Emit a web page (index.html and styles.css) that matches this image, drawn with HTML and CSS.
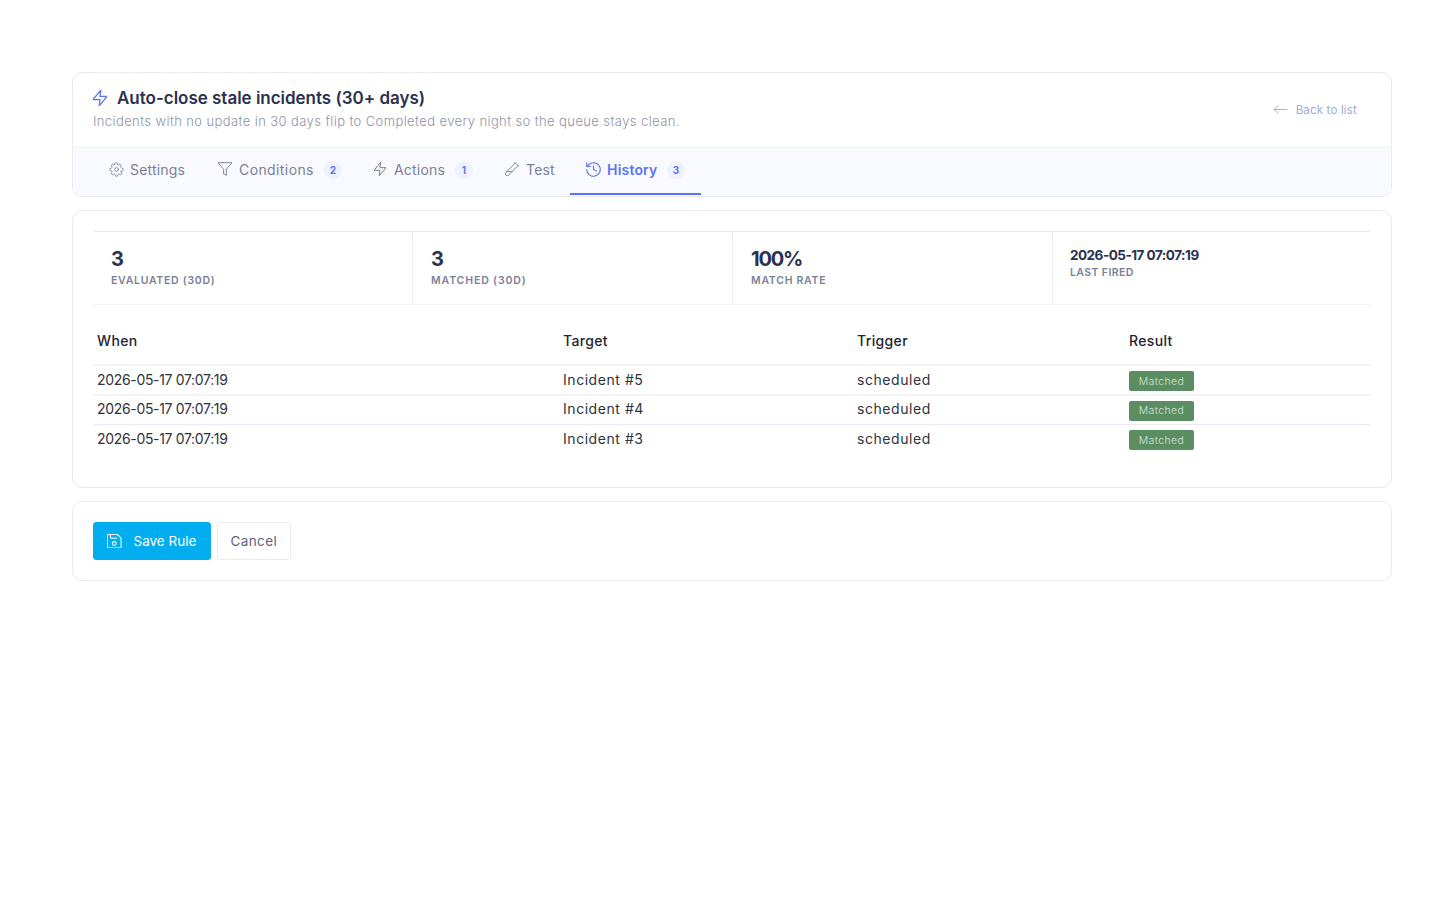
FILE: index.html
```html
<!DOCTYPE html>
<html lang="en">
<head>
<meta charset="utf-8">
<title>Auto-close stale incidents</title>
<link rel="stylesheet" href="styles.css">
</head>
<body>
<main class="page">
  <section class="card head-card">
    <header class="head">
      <div class="head-text">
        <h1 class="title">
          <svg class="ic ic-title" viewBox="3 2 18 20"><path d="M13 2 3 14h9l-1 8 10-12h-9l1-8z"/></svg>
          <span>Auto-close stale incidents (30+ days)</span>
        </h1>
        <p class="sub">Incidents with no update in 30 days flip to Completed every night so the queue stays clean.</p>
      </div>
      <a class="back" href="#">
        <svg class="ic ic-back" viewBox="0 0 24 24"><path d="M20 12H4M9 17l-5-5 5-5"/></svg>
        <span>Back to list</span>
      </a>
    </header>
    <nav class="tabs">
      <a class="tab t-settings" href="#"><svg class="ic" viewBox="0 0 24 24"><circle cx="12" cy="12" r="3"/><path d="M19.4 15a1.65 1.65 0 0 0 .33 1.82l.06.06a2 2 0 1 1-2.83 2.83l-.06-.06a1.65 1.65 0 0 0-2.82 1.17V21a2 2 0 1 1-4 0v-.09A1.65 1.65 0 0 0 9 19.4a1.65 1.65 0 0 0-1.82.33l-.06.06a2 2 0 1 1-2.83-2.83l.06-.06a1.65 1.65 0 0 0-1.17-2.82H3a2 2 0 1 1 0-4h.09A1.65 1.65 0 0 0 4.6 9a1.65 1.65 0 0 0-.33-1.82l-.06-.06a2 2 0 1 1 2.83-2.83l.06.06A1.65 1.65 0 0 0 9 4.68V3a2 2 0 1 1 4 0v.09a1.65 1.65 0 0 0 2.82 1.17l.06-.06a2 2 0 1 1 2.83 2.83l-.06.06A1.65 1.65 0 0 0 19.4 9c.26.6.85 1 1.51 1H21a2 2 0 1 1 0 4h-.09c-.66 0-1.25.4-1.51 1z"/></svg><span class="lbl">Settings</span></a>
      <a class="tab t-cond" href="#"><svg class="ic ic-filter" viewBox="2 2 20 20"><path d="M22 3H2l8 9.46V19l4 2v-8.54L22 3z"/></svg><span class="lbl">Conditions</span><span class="pill">2</span></a>
      <a class="tab t-act" href="#"><svg class="ic ic-zap" viewBox="3 2 18 20"><path d="M13 2 3 14h9l-1 8 10-12h-9l1-8z"/></svg><span class="lbl">Actions</span><span class="pill">1</span></a>
      <a class="tab t-test" href="#"><svg class="ic ic-tube" viewBox="1.5 1.5 21 21"><path d="M21 7 6.82 21.18a2.83 2.83 0 0 1-3.99-.01 2.83 2.83 0 0 1 0-4L17 3"/><path d="m16 2 6 6M12 16H4"/></svg><span class="lbl">Test</span></a>
      <a class="tab t-hist active" href="#"><svg class="ic" viewBox="2 2 20 20"><path d="M3 12a9 9 0 1 0 3-6.7L3 8"/><path d="M3 3v5h5M12 7v5l4 2"/></svg><span class="lbl">History</span><span class="pill">3</span></a>
    </nav>
  </section>

  <section class="card body-card">
    <div class="stats">
      <div class="stat"><div class="num">3</div><div class="cap">EVALUATED (30D)</div></div>
      <div class="stat stat-matched"><div class="num">3</div><div class="cap">MATCHED (30D)</div></div>
      <div class="stat"><div class="num">100%</div><div class="cap">MATCH RATE</div></div>
      <div class="stat stat-date"><div class="num">2026-05-17 07:07:19</div><div class="cap">LAST FIRED</div></div>
    </div>
    <table class="tbl">
      <colgroup><col class="c1"><col class="c2"><col class="c3"><col class="c4"></colgroup>
      <thead><tr><th>When</th><th>Target</th><th>Trigger</th><th>Result</th></tr></thead>
      <tbody>
        <tr><td class="when">2026-05-17 07:07:19</td><td>Incident #5</td><td>scheduled</td><td><span class="badge">Matched</span></td></tr>
        <tr><td class="when">2026-05-17 07:07:19</td><td>Incident #4</td><td>scheduled</td><td><span class="badge">Matched</span></td></tr>
        <tr><td class="when">2026-05-17 07:07:19</td><td>Incident #3</td><td>scheduled</td><td><span class="badge">Matched</span></td></tr>
      </tbody>
    </table>
  </section>

  <section class="card foot-card">
    <button class="btn primary" type="button"><svg class="ic" viewBox="2.5 2.5 19 19"><path d="M15.2 3a2 2 0 0 1 1.4.6l3.8 3.8a2 2 0 0 1 .6 1.4V19a2 2 0 0 1-2 2H5a2 2 0 0 1-2-2V5a2 2 0 0 1 2-2z"/><path d="M7 3v4a1 1 0 0 0 1 1h7"/><circle cx="12" cy="15" r="2.5"/></svg><span>Save Rule</span></button>
    <button class="btn ghost" type="button">Cancel</button>
  </section>
</main>
</body>
</html>
```

FILE: styles.css
```css
* { box-sizing: border-box; }
html, body { margin: 0; padding: 0; background: #fff; }
body { font-family: Inter, "Liberation Sans", sans-serif; color: #2b2f4c; font-size: 14px; }
.page { padding: 72px 48px 0 72px; display: flex; flex-direction: column; gap: 13px; }
.card { background: #fff; border: 1px solid #e9ebf3; border-radius: 10px; }
.ic { width: 16px; height: 16px; fill: none; stroke: currentColor; stroke-width: 1.5; stroke-linecap: round; stroke-linejoin: round; flex: none; }

.head-card { height: 125px; overflow: hidden; }
.head { height: 74px; display: flex; align-items: flex-start; justify-content: space-between; padding: 15px 34px 0 20px; }
.title { margin: 0; display: flex; align-items: center; gap: 10px; font-size: 17px; line-height: 21px; font-weight: 600; color: #2b3150; letter-spacing: -.02px; }
.ic-title { color: #5b73f5; width: 14px; height: 16px; margin-top: -2px; stroke-width: 1.6; }
.sub { margin: 2px 0 0; font-size: 13px; line-height: 20px; color: #8f93a8; letter-spacing: .4px; font-weight: 300; }
.back { display: flex; align-items: center; gap: 6px; margin-top: 12px; font-size: 11.5px; line-height: 18px; color: #a0abe2; text-decoration: none; letter-spacing: .17px; }
.ic-back { width: 19px; height: 19px; stroke-width: 1.2; }

.tabs { height: 49px; display: flex; background: #f9faff; border-top: 1px solid #f0f1f7; padding-left: 20px; }
.tab { display: flex; align-items: center; height: 47px; padding: 0 16px 3px; color: #7a7f99; text-decoration: none; font-size: 14px; border-bottom: 2px solid transparent; letter-spacing: .2px; }
.tab .ic { margin-right: 6px; stroke-width: 1.3; width: 15px; height: 15px; }
.tab .ic-filter { width: 14px; height: 14px; margin-right: 7px; stroke-width: 1.35; }
.tab .ic-zap { width: 12px; height: 14px; margin-right: 8px; stroke-width: 1.5; }
.tab .ic-tube { width: 14px; height: 14px; margin-right: 7px; stroke-width: 1.4; }
.t-settings { width: 109px; }
.t-cond { width: 156px; }
.t-cond .lbl { letter-spacing: .4px; }
.t-act { width: 131px; }
.t-test { width: 81px; }
.t-hist { width: 131px; }
.pill { width: 18px; height: 18px; margin-left: auto; margin-top: 2px; border-radius: 50%; background: #eef1fe; color: #5b73f5; font-size: 10px; font-weight: 700; display: flex; align-items: center; justify-content: center; }
.tab.active { color: #5b73f5; border-bottom-color: #5b73f5; font-weight: 600; }
.tab.active .ic { stroke-width: 1.5; }

.body-card { height: 278px; padding: 20px; }
.stats { display: grid; grid-template-columns: 319px 320px 320px 1fr; height: 74px; border-top: 1px solid #e9ebf3; border-bottom: 1px solid #f4f5f9; }
.stat { padding: 14px 18px 0; border-left: 1px solid #e9ebf3; }
.stat:first-child { border-left: 0; }
.num { font-size: 20px; line-height: 26px; font-weight: 700; color: #2b3150; letter-spacing: -1.2px; }
.cap { font-size: 10.5px; line-height: 16px; font-weight: 600; color: #7a7f99; letter-spacing: .72px; margin-top: 1px; }
.stat-matched .cap { letter-spacing: .87px; }
.stat-date { padding: 13px 17px 0; }
.stat-date .num { font-size: 13.5px; line-height: 20px; letter-spacing: -.5px; }
.stat-date .cap { margin-top: 0; letter-spacing: .4px; }

.tbl { width: 100%; border-collapse: collapse; table-layout: fixed; margin-top: 12px; color: #2f3240; }
.c1 { width: 466px; } .c2 { width: 294px; } .c3 { width: 272px; }
.tbl th { text-align: left; font-size: 14px; font-weight: 500; height: 48px; padding: 0 4px; color: #22252f; border-bottom: 2px solid #f3f4fa; letter-spacing: .35px; }
.tbl td { padding: 0 4px 2px; font-size: 14px; border-bottom: 2px solid #f3f4fa; letter-spacing: .55px; font-weight: 400; }
.tbl tbody tr:nth-child(1) td { height: 30px; }
.tbl tbody tr:nth-child(2) td { height: 29px; border-bottom: 1px solid #e9eaf3; }
.tbl tbody tr:nth-child(3) td { height: 30px; border-bottom: 0; }
.tbl td.when { letter-spacing: -.33px; }
.badge { display: inline-flex; align-items: center; justify-content: center; width: 65px; height: 20px; margin-top: 2px; transform: translateY(1px); background: #5a8d61; color: #d3e5d6; border-radius: 2px; font-size: 10.5px; font-weight: 300; letter-spacing: .4px; vertical-align: middle; }

.foot-card { height: 80px; padding: 20px; display: flex; gap: 6px; align-items: flex-start; }
.btn { height: 38px; border-radius: 3px; font: inherit; font-size: 13.5px; display: flex; align-items: center; cursor: pointer; }
.primary { width: 117.5px; background: #00aef0; color: #fff; border: 1px solid #00aef0; padding: 0 0 0 13px; gap: 12px; }
.primary .ic { width: 14.5px; height: 14.5px; stroke-width: 1.4; }
.ghost { width: 74.5px; background: #fff; color: #5f6278; border: 1px solid #e9ebf3; justify-content: center; letter-spacing: .4px; }
```
